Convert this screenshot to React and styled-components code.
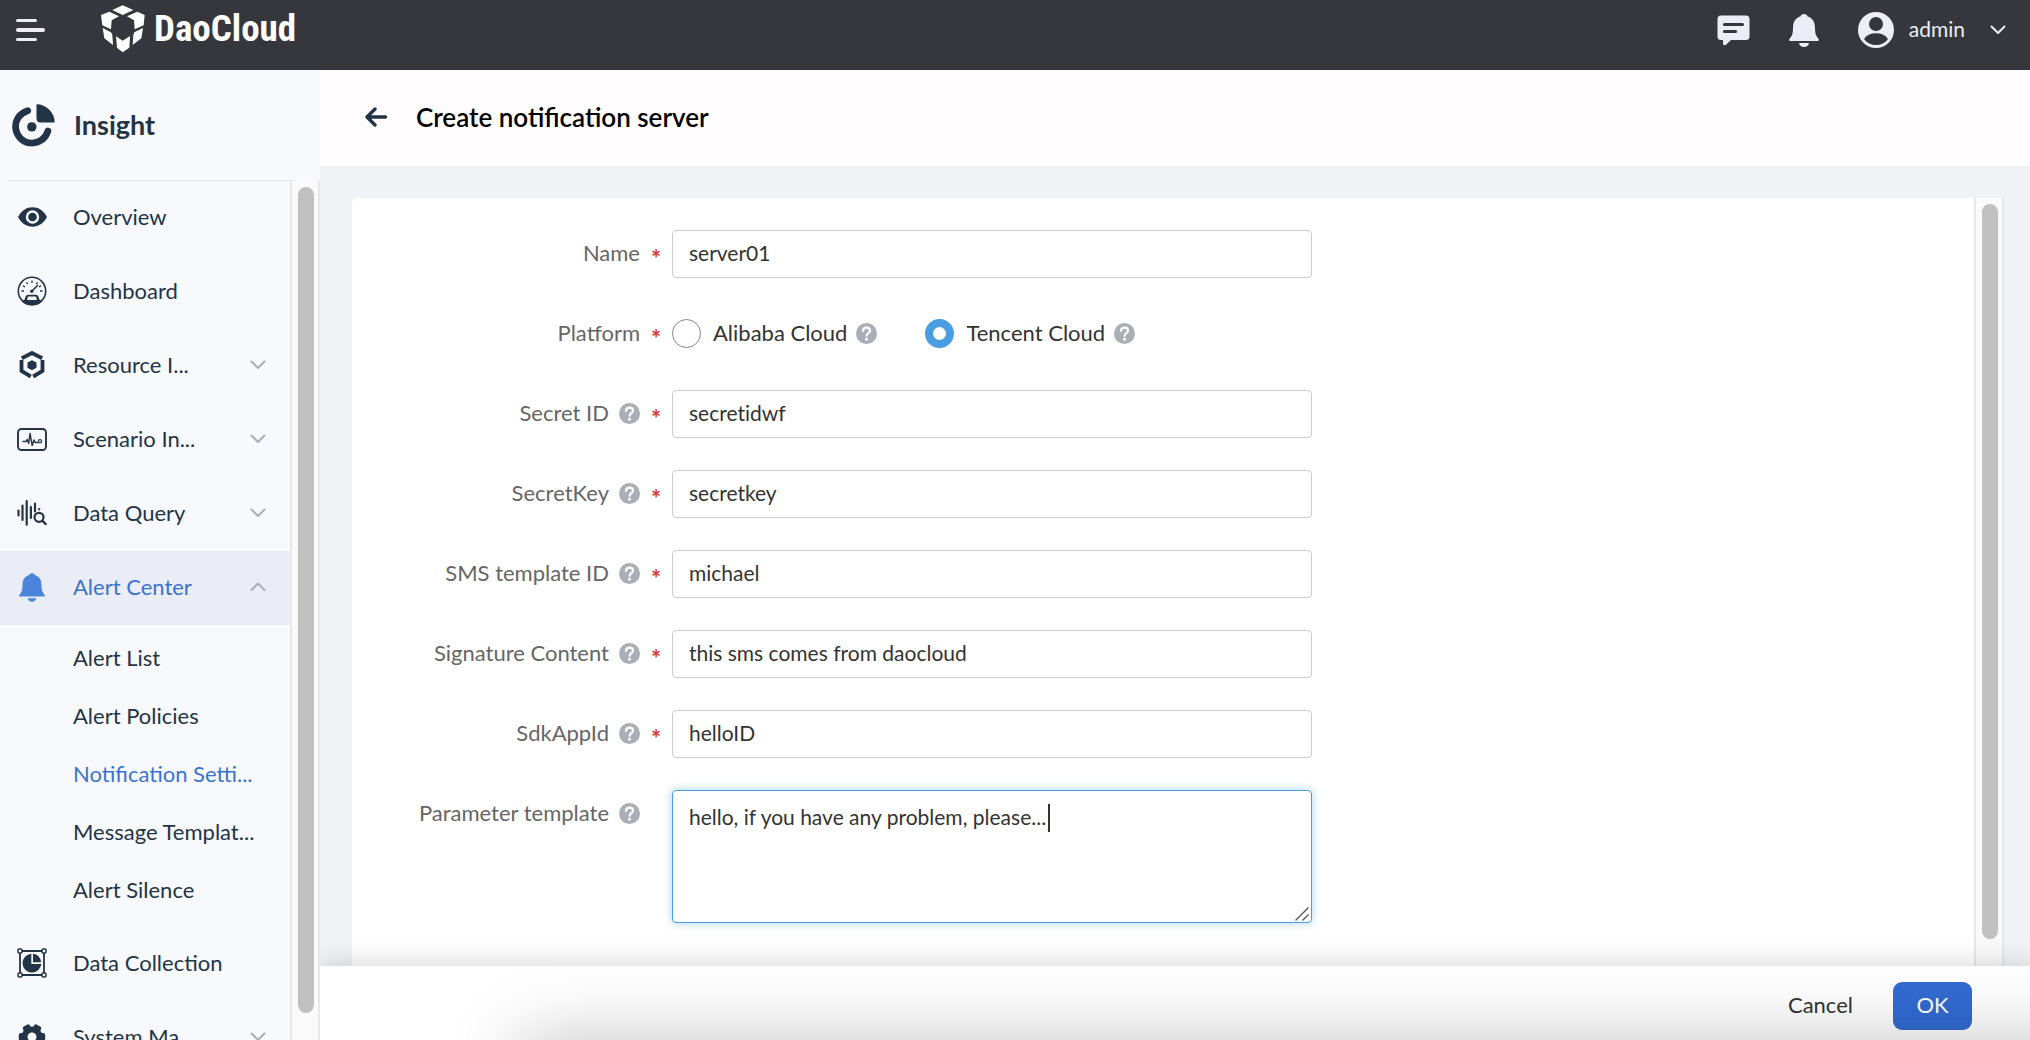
import React, { useState, useRef, useLayoutEffect } from 'react';
import styled, { createGlobalStyle, ThemeProvider } from 'styled-components';

const theme = {
  colors: {
    topbar: '#36373c',
    navy: '#243447',
    primary: '#326bd3',
    link: '#3b73cf',
    focus: '#4a9de3',
    sidebar: '#f7f9fd',
    page: '#f1f2f6',
    border: '#cccbd6',
    label: '#666666',
    text: '#333333',
    muted: '#aaafb7',
    required: '#d93a36',
  },
};

const GlobalStyle = createGlobalStyle`
  *, *::before, *::after {
    box-sizing: border-box;
  }

  body {
    margin: 0;
    font-family: Lato, 'Open Sans', sans-serif;
    font-size: 22px;
    line-height: 28px;
  }

  button, input, textarea {
    font: inherit;
  }
`;

const Shell = styled.div`
  display: flex;
  flex-direction: column;
  height: 100vh;
  overflow: hidden;
`;

/* ---------- top bar ---------- */

const TopBar = styled.header`
  display: flex;
  align-items: center;
  height: 70px;
  flex-shrink: 0;
  padding: 0 24px 10px 16px;
  background: ${props => props.theme.colors.topbar};
  color: #ebeef6;
`;

const IconButton = styled.button`
  display: flex;
  padding: 0;
  border: none;
  background: none;
  color: inherit;
  cursor: pointer;
`;

const Brand = styled.a`
  display: flex;
  align-items: center;
  gap: 9px;
  margin-left: 55px;
  padding-bottom: 2px;
  color: #fff;
  font-family: 'Liberation Sans Narrow', 'Roboto Condensed', 'Open Sans', sans-serif;
  font-size: 37px;
  font-weight: 700;
  text-decoration: none;
`;

const TopActions = styled.div`
  display: flex;
  align-items: center;
  gap: 39px;
  margin-left: auto;
`;

const UserButton = styled(IconButton)`
  align-items: center;
  gap: 15px;
`;

const UserName = styled.span`
  margin-right: 10px;
  padding-bottom: 2px;
  font-size: 21px;
`;

/* ---------- sidebar ---------- */

const Body = styled.div`
  display: flex;
  flex: 1;
  min-height: 0;
`;

const Sidebar = styled.aside`
  display: flex;
  flex-direction: column;
  width: 320px;
  flex-shrink: 0;
  background: ${props => props.theme.colors.sidebar};
  color: ${props => props.theme.colors.navy};
`;

const SidebarTitle = styled.h2`
  display: flex;
  align-items: center;
  gap: 19px;
  height: 111px;
  flex-shrink: 0;
  margin: 0 24px 0 8px;
  padding: 0 4px;
  border-bottom: 1px solid #e4e6ea;
  font-size: 27px;
  font-weight: 700;
`;

const SidebarScroll = styled.div`
  display: flex;
  flex: 1;
  min-height: 0;
`;

const Nav = styled.nav`
  flex: 1;
  min-width: 0;
  overflow: hidden;
`;

const NavItem = styled.a`
  display: flex;
  align-items: center;
  height: 74px;
  padding: 0 24px 2px 16px;
  background: ${props => (props.$active ? '#eaedf5' : 'transparent')};
  color: ${props => (props.$active ? props.theme.colors.link : 'inherit')};
  text-decoration: none;
`;

const NavIcon = styled.span`
  display: flex;
  justify-content: center;
  width: 32px;
  margin-right: 25px;
  color: ${props => (props.$active ? '#4c84db' : 'inherit')};
`;

const NavLabel = styled.span`
  flex: 1;
  white-space: nowrap;
`;

const NavArrow = styled.span`
  display: flex;
  color: ${props => props.theme.colors.muted};
`;

const SubMenu = styled.div`
  padding: 4px 0 8px;
`;

const SubItem = styled.a`
  display: flex;
  align-items: center;
  height: 58px;
  padding-left: 73px;
  color: ${props => (props.$active ? props.theme.colors.link : 'inherit')};
  text-decoration: none;
  white-space: nowrap;
`;

const Track = styled.div`
  display: flex;
  width: 30px;
  flex-shrink: 0;
  padding: 6px 4px 27px 6px;
  border: solid #e8e8e8;
  border-width: 0 2px;
  background: #fafafa;
`;

const Thumb = styled.div`
  flex: 1;
  border-radius: 8px;
  background: #c1c1c1;
`;

/* ---------- page ---------- */

const Main = styled.main`
  display: flex;
  flex-direction: column;
  flex: 1;
  min-width: 0;
  overflow: hidden;
  background: ${props => props.theme.colors.page};
`;

const PageHeader = styled.div`
  display: flex;
  align-items: center;
  gap: 29px;
  height: 96px;
  flex-shrink: 0;
  padding: 0 45px 2px;
  background: #fffdfe;
  color: ${props => props.theme.colors.navy};
`;

const PageTitle = styled.h1`
  margin: 0;
  color: #000;
  font-size: 26px;
  font-weight: 600;
`;

const Content = styled.div`
  display: flex;
  flex: 1;
  min-height: 0;
  padding: 32px 26px 0 32px;
`;

const Panel = styled.form`
  flex: 1;
  min-width: 0;
  overflow: hidden;
  padding-top: 32px;
  border-top-left-radius: 6px;
  background: #fff;
`;

const Row = styled.div`
  display: flex;
  margin-bottom: 32px;
`;

const LabelCell = styled.div`
  display: flex;
  align-items: center;
  justify-content: flex-end;
  gap: 10px;
  width: 288px;
  height: 48px;
  padding-bottom: 2px;
  color: ${props => props.theme.colors.label};
`;

const Required = styled.span`
  width: 32px;
  padding-top: 15px;
  color: ${props => props.theme.colors.required};
  font-size: 24px;
  font-weight: 700;
  text-align: center;
`;

const TextInput = styled.input`
  width: 640px;
  height: 48px;
  padding: 0 16px 3px;
  border: 1px solid ${props => props.theme.colors.border};
  border-radius: 4px;
  background: #fff;
  color: ${props => props.theme.colors.text};
  font-size: 21px;
  font-variant-ligatures: none;
  outline: none;
`;

const AreaWrap = styled.div`
  position: relative;
  width: 640px;
`;

const TextArea = styled.textarea`
  display: block;
  width: 100%;
  height: 133px;
  padding: 12px 16px;
  border: 1px solid ${props => props.theme.colors.focus};
  border-radius: 4px;
  box-shadow: 0 0 10px rgba(74, 157, 227, 0.45);
  color: ${props => props.theme.colors.text};
  font-size: 21px;
  font-variant-ligatures: none;
  caret-color: transparent;
  outline: none;
  resize: none;
`;

const Caret = styled.span`
  position: absolute;
  top: 14px;
  width: 2px;
  height: 28px;
  background: ${props => props.theme.colors.text};
`;

const Grip = styled.svg`
  position: absolute;
  right: 3px;
  bottom: 2px;
`;

const RadioGroup = styled.div`
  display: flex;
  align-items: center;
  gap: 48px;
  height: 48px;
  padding-bottom: 2px;
  color: ${props => props.theme.colors.text};
`;

const RadioOption = styled.label`
  display: flex;
  align-items: center;
  gap: 9px;
  cursor: pointer;
`;

const Radio = styled.input`
  appearance: none;
  width: 29px;
  height: 29px;
  margin: 0 3px 0 0;
  border: 1px solid #85858f;
  border-radius: 50%;
  background: #fff;

  &:checked {
    border: 8px solid ${props => props.theme.colors.focus};
  }
`;

const Footer = styled.footer`
  position: relative;
  display: flex;
  align-items: flex-start;
  justify-content: flex-end;
  gap: 40px;
  height: 74px;
  flex-shrink: 0;
  padding: 16px 58px 0 0;
  background: #fff;
  box-shadow: 0 0 30px rgba(0, 0, 0, 0.18);

  &::after {
    content: '';
    position: absolute;
    top: 100%;
    left: 200px;
    right: -100px;
    height: 200px;
    box-shadow: 0 0 74px rgba(0, 0, 0, 0.24);
    pointer-events: none;
  }
`;

const CancelButton = styled.button`
  height: 48px;
  padding: 0 0 2px;
  border: none;
  background: none;
  color: ${props => props.theme.colors.text};
`;

const OkButton = styled.button`
  width: 79px;
  height: 48px;
  padding: 0 0 2px;
  border: none;
  border-radius: 9px;
  background: ${props => props.theme.colors.primary};
  color: #fff;
`;

/* ---------- icons ---------- */

const MenuIcon = () => (
  <svg width="30" height="24" viewBox="0 0 30 24" fill="none" stroke="currentColor" strokeLinecap="round">
    <path d="M1.5 2.5h18M1.5 21.5h18" strokeWidth="3" />
    <path d="M2 12h25" strokeWidth="4" />
  </svg>
);

const DaoLogo = () => (
  <svg width="44" height="48" viewBox="303 17 132 144" fill="#fff">
    <path d="M368 18l32 14-32 15-31-15z" />
    <path d="M303 47l25-10 29 14-22 12-2 27-26-12z" />
    <path d="M434 47l-22-10-31 14 21 12 2 27 27-12z" />
    <path d="M308 86l25 13 4 8 2 30-26-20z" />
    <path d="M429 86l-26 13-3 8-2 30 26-20z" />
    <path d="M348 111l20 13 22-14-2 35-20 14-17-14z" />
  </svg>
);

const MessageIcon = () => (
  <svg width="33" height="31" viewBox="0 0 33 31">
    <path fill="currentColor" d="M4 .5h25a3.500 3.500 0 0 1 3.500 3.500v17.500a3.500 3.500 0 0 1-3.500 3.500H14l-5 4.700c-1 .9-3 .5-3-1V25H4a3.500 3.500 0 0 1-3.500-3.500V4A3.500 3.500 0 0 1 4 .5z" />
    <path d="M7.500 9.500h18M7.500 16.500h11" stroke="#36373c" strokeWidth="3.200" strokeLinecap="round" />
  </svg>
);

const BellIcon = ({ width = 30, height = 33 }) => (
  <svg width={width} height={height} viewBox="0 0 30 33" fill="currentColor">
    <path d="M15 0c1.800 0 3.200 1 3.700 2.500 4.500 1.300 7 5 7.200 10 .2 5 .4 8.200 2 10.300l1.500 2c.9 1.300.3 2.200-1 2.200H1.600c-1.300 0-1.900-.9-1-2.200l1.500-2c1.600-2.100 1.800-5.300 2-10.300.2-5 2.700-8.700 7.200-10C11.800 1 13.200 0 15 0z" />
    <path d="M10 29h10c-.4 2.500-2.400 4-5 4s-4.600-1.500-5-4z" />
  </svg>
);

const AvatarIcon = () => (
  <svg width="36" height="36" viewBox="0 0 36 36">
    <circle cx="18" cy="18" r="18" fill="currentColor" />
    <circle cx="18" cy="12" r="7" fill="#36373c" />
    <path d="M6 27c3-4 7-5.700 12-5.700S27 23 30 27c-3 4-7 6-12 6S9 31 6 27z" fill="#36373c" />
  </svg>
);

const Chevron = ({ up, strokeWidth = 2 }) => (
  <svg width="16" height="10" viewBox="0 0 16 10" fill="none" stroke="currentColor" strokeWidth={strokeWidth} strokeLinecap="round" strokeLinejoin="round">
    <path d={up ? 'M1.500 8L8 1.500 14.500 8' : 'M1.500 1.500L8 8l6.500-6.500'} />
  </svg>
);

const InsightIcon = () => (
  <svg width="43" height="43" viewBox="35 312 128 128">
    <path d="M82 332A49 49 0 1 0 142 392" fill="none" stroke="currentColor" strokeWidth="20" strokeLinecap="round" />
    <circle cx="94" cy="380" r="14" fill="currentColor" />
    <path d="M108 313a54 54 0 0 1 54 54h-42q-12 0-12-12z" fill="currentColor" />
  </svg>
);

const EyeIcon = () => (
  <svg width="29" height="20" viewBox="0 0 29 20">
    <path fill="currentColor" d="M0 10C3.500 3.500 8.500.3 14.500.3S25.500 3.500 29 10c-3.500 6.500-8.500 9.700-14.500 9.700S3.500 16.500 0 10z" />
    <circle cx="14.500" cy="10" r="5.500" fill="currentColor" stroke="#f7f9fd" strokeWidth="2.400" />
  </svg>
);

const GaugeIcon = () => (
  <svg width="30" height="30" viewBox="0 0 30 30" fill="none" stroke="currentColor">
    <circle cx="15" cy="15" r="13.700" strokeWidth="1.600" />
    <path d="M4.500 15h2.500M23 15h2.500M6 9.800l2 1M24 9.800l-2 1M9.500 6.300l1.200 1.800M20.500 6.300l-1.200 1.800M15 4.500v2.500" strokeWidth="1.300" />
    <path d="M15 15l5.500-5.500" strokeWidth="1.600" strokeLinecap="round" />
    <circle cx="14.800" cy="15.300" r="1.700" fill="currentColor" stroke="none" />
    <path fillRule="evenodd" stroke="none" fill="currentColor" d="M4.500 24.500c1.700.2 3-.3 3.500-2l.6-2q.6-1.800 2.400-1.800h8q1.800 0 2.400 1.800l.6 2c.5 1.700 1.800 2.200 3.500 2C22.500 31 7.500 31 4.500 24.500zM11 20.600l-.9 3.400h9.800l-.9-3.400z" />
  </svg>
);

const HexIcon = () => (
  <svg width="26" height="28" viewBox="0 0 26 28">
    <path fill="none" stroke="currentColor" strokeWidth="3.800" d="M2.800 7.300L13 2l10.200 5.300" />
    <path fill="none" stroke="currentColor" strokeWidth="3.800" d="M2.500 9v11l9.300 5.500M23.500 9v11l-9.300 5.500" />
    <path fill="currentColor" d="M13 9.300l4.500 2.300v5.200L13 19.300l-4.500-2.500v-5.200z" />
  </svg>
);

const PulseIcon = () => (
  <svg width="30" height="23" viewBox="0 0 30 23" fill="none" stroke="currentColor" strokeLinejoin="round" strokeLinecap="round">
    <rect x="1" y="1" width="28" height="21" rx="3.500" strokeWidth="1.900" />
    <path d="M6 13.500h3l1.300-2 1.400 4L13 5.500l2.200 12 1.800-5.500 1.200 2.500h2.500" strokeWidth="1.400" />
    <circle cx="23" cy="13.200" r="1.600" strokeWidth="1.200" />
  </svg>
);

const QueryIcon = () => (
  <svg width="30" height="26" viewBox="0 0 30 26" fill="none" stroke="currentColor" strokeWidth="2.200" strokeLinecap="round">
    <path d="M1.500 10.500v5M5.500 5.500v14.500M9.700 1.200v23.500M13.900 7v11M18 3.500v8M22.200 9v.3" />
    <circle cx="22" cy="17.300" r="4.500" />
    <path d="M25.500 20.800l3.200 3.200" strokeWidth="2.400" />
  </svg>
);

const CollectionIcon = () => (
  <svg width="30" height="30" viewBox="0 0 30 30" fill="none" stroke="currentColor">
    <path d="M5 3h20M5 27h20M3 5v20M27 5v20" strokeWidth="1.800" />
    <g strokeWidth="1.500">
      <rect x="1" y="1" width="4" height="4" rx="1" />
      <rect x="25" y="1" width="4" height="4" rx="1" />
      <rect x="1" y="25" width="4" height="4" rx="1" />
      <rect x="25" y="25" width="4" height="4" rx="1" />
    </g>
    <path stroke="none" fill="currentColor" d="M14.300 5.800v10.200h10A9.400 9.400 0 1 1 14.300 5.800z" />
    <path stroke="none" fill="currentColor" d="M16 5.800a9 9 0 0 1 8.200 8.500H16z" />
  </svg>
);

const GearIcon = () => (
  <svg width="28" height="28" viewBox="-14 -14 28 28">
    <circle r="7.500" fill="none" stroke="currentColor" strokeWidth="6" />
    <g fill="currentColor">
      {[30, 90, 150, 210, 270, 330].map(angle => (
        <rect key={angle} x="-4" y="-13.200" width="8" height="6" rx="2.200" transform={`rotate(${angle})`} />
      ))}
    </g>
  </svg>
);

const BackIcon = () => (
  <svg width="22" height="20" viewBox="0 0 22 20" fill="none" stroke="currentColor" strokeWidth="3.400" strokeLinecap="round" strokeLinejoin="round">
    <path d="M10 2L2 10l8 8M2.500 10h18" />
  </svg>
);

const HelpIcon = () => (
  <svg width="21" height="21" viewBox="0 0 21 21" aria-hidden="true">
    <circle cx="10.500" cy="10.500" r="10.500" fill="#aaafb7" />
    <path d="M7 8c0-2 1.500-3.300 3.600-3.300S14 6 14 7.800c0 2.400-3.400 2.500-3.400 5" fill="none" stroke="#fff" strokeWidth="2.200" strokeLinecap="round" />
    <circle cx="10.500" cy="16.300" r="1.500" fill="#fff" />
  </svg>
);

/* ---------- data ---------- */

const navBefore = [
  { label: 'Overview', icon: <EyeIcon /> },
  { label: 'Dashboard', icon: <GaugeIcon /> },
  { label: 'Resource I...', icon: <HexIcon />, arrow: true },
  { label: 'Scenario In...', icon: <PulseIcon />, arrow: true },
  { label: 'Data Query', icon: <QueryIcon />, arrow: true },
];

const alertItems = ['Alert List', 'Alert Policies', 'Notification Setti...', 'Message Templat...', 'Alert Silence'];

const navAfter = [
  { label: 'Data Collection', icon: <CollectionIcon /> },
  { label: 'System Ma...', icon: <GearIcon />, arrow: true },
];

const textFields = [
  { name: 'secretId', label: 'Secret ID' },
  { name: 'secretKey', label: 'SecretKey' },
  { name: 'templateId', label: 'SMS template ID' },
  { name: 'signature', label: 'Signature Content' },
  { name: 'sdkAppId', label: 'SdkAppId' },
];

const NavLink = ({ label, icon, arrow }) => (
  <NavItem href="#">
    <NavIcon>{icon}</NavIcon>
    <NavLabel>{label}</NavLabel>
    {arrow && <NavArrow><Chevron /></NavArrow>}
  </NavItem>
);

const Field = ({ id, label, help, required, children }) => (
  <Row>
    <LabelCell>
      <label htmlFor={id}>{label}</label>
      {help && <HelpIcon />}
    </LabelCell>
    <Required>{required && '*'}</Required>
    {children}
  </Row>
);

const TemplateArea = ({ id, value, onChange }) => {
  const areaRef = useRef(null);
  const [caretLeft, setCaretLeft] = useState(0);

  // keep the caret at the end of the typed text
  useLayoutEffect(() => {
    const style = getComputedStyle(areaRef.current);
    const ctx = document.createElement('canvas').getContext('2d');
    ctx.font = `${style.fontSize} ${style.fontFamily}`;
    setCaretLeft(17 + Math.round(ctx.measureText(value).width));
  }, [value]);

  return (
    <AreaWrap>
      <TextArea id={id} ref={areaRef} value={value} onChange={onChange} />
      <Caret style={{ left: caretLeft }} />
      <Grip width="14" height="14" viewBox="0 0 14 14" stroke="#555" strokeWidth="1.400">
        <path d="M.5 13.500l13-13M7.500 13.500l6-6" />
      </Grip>
    </AreaWrap>
  );
};

const App = () => {
  const [values, setValues] = useState({
    name: 'server01',
    platform: 'tencent',
    secretId: 'secretidwf',
    secretKey: 'secretkey',
    templateId: 'michael',
    signature: 'this sms comes from daocloud',
    sdkAppId: 'helloID',
    template: 'hello, if you have any problem, please...',
  });

  const update = (name) => (e) => {
    const { value } = e.target;
    setValues(prev => ({ ...prev, [name]: value }));
  };

  return (
    <ThemeProvider theme={theme}>
      <GlobalStyle />
      <Shell>
        <TopBar>
          <IconButton aria-label="Menu"><MenuIcon /></IconButton>
          <Brand href="#"><DaoLogo />DaoCloud</Brand>
          <TopActions>
            <IconButton aria-label="Messages"><MessageIcon /></IconButton>
            <IconButton aria-label="Notifications"><BellIcon /></IconButton>
            <UserButton>
              <AvatarIcon />
              <UserName>admin</UserName>
              <Chevron />
            </UserButton>
          </TopActions>
        </TopBar>
        <Body>
          <Sidebar>
            <SidebarTitle><InsightIcon />Insight</SidebarTitle>
            <SidebarScroll>
              <Nav>
                {navBefore.map(item => <NavLink key={item.label} {...item} />)}
                <NavItem href="#" $active>
                  <NavIcon $active><BellIcon width={26} height={29} /></NavIcon>
                  <NavLabel>Alert Center</NavLabel>
                  <NavArrow><Chevron up /></NavArrow>
                </NavItem>
                <SubMenu>
                  {alertItems.map(label => (
                    <SubItem key={label} href="#" $active={label.startsWith('Notification')}>{label}</SubItem>
                  ))}
                </SubMenu>
                {navAfter.map(item => <NavLink key={item.label} {...item} />)}
              </Nav>
              <Track><Thumb /></Track>
            </SidebarScroll>
          </Sidebar>
          <Main>
            <PageHeader>
              <IconButton aria-label="Back"><BackIcon /></IconButton>
              <PageTitle>Create notification server</PageTitle>
            </PageHeader>
            <Content>
              <Panel id="server-form" onSubmit={e => e.preventDefault()}>
                <Field id="name" label="Name" required>
                  <TextInput id="name" value={values.name} onChange={update('name')} />
                </Field>
                <Field id="alibaba" label="Platform" required>
                  <RadioGroup>
                    <RadioOption>
                      <Radio id="alibaba" type="radio" name="platform" value="alibaba" checked={values.platform === 'alibaba'} onChange={update('platform')} />
                      Alibaba Cloud
                      <HelpIcon />
                    </RadioOption>
                    <RadioOption>
                      <Radio type="radio" name="platform" value="tencent" checked={values.platform === 'tencent'} onChange={update('platform')} />
                      Tencent Cloud
                      <HelpIcon />
                    </RadioOption>
                  </RadioGroup>
                </Field>
                {textFields.map(({ name, label }) => (
                  <Field key={name} id={name} label={label} help required>
                    <TextInput id={name} value={values[name]} onChange={update(name)} />
                  </Field>
                ))}
                <Field id="template" label="Parameter template" help>
                  <TemplateArea id="template" value={values.template} onChange={update('template')} />
                </Field>
              </Panel>
              <Track><Thumb /></Track>
            </Content>
            <Footer>
              <CancelButton type="button">Cancel</CancelButton>
              <OkButton type="submit" form="server-form">OK</OkButton>
            </Footer>
          </Main>
        </Body>
      </Shell>
    </ThemeProvider>
  );
};

export default App;
